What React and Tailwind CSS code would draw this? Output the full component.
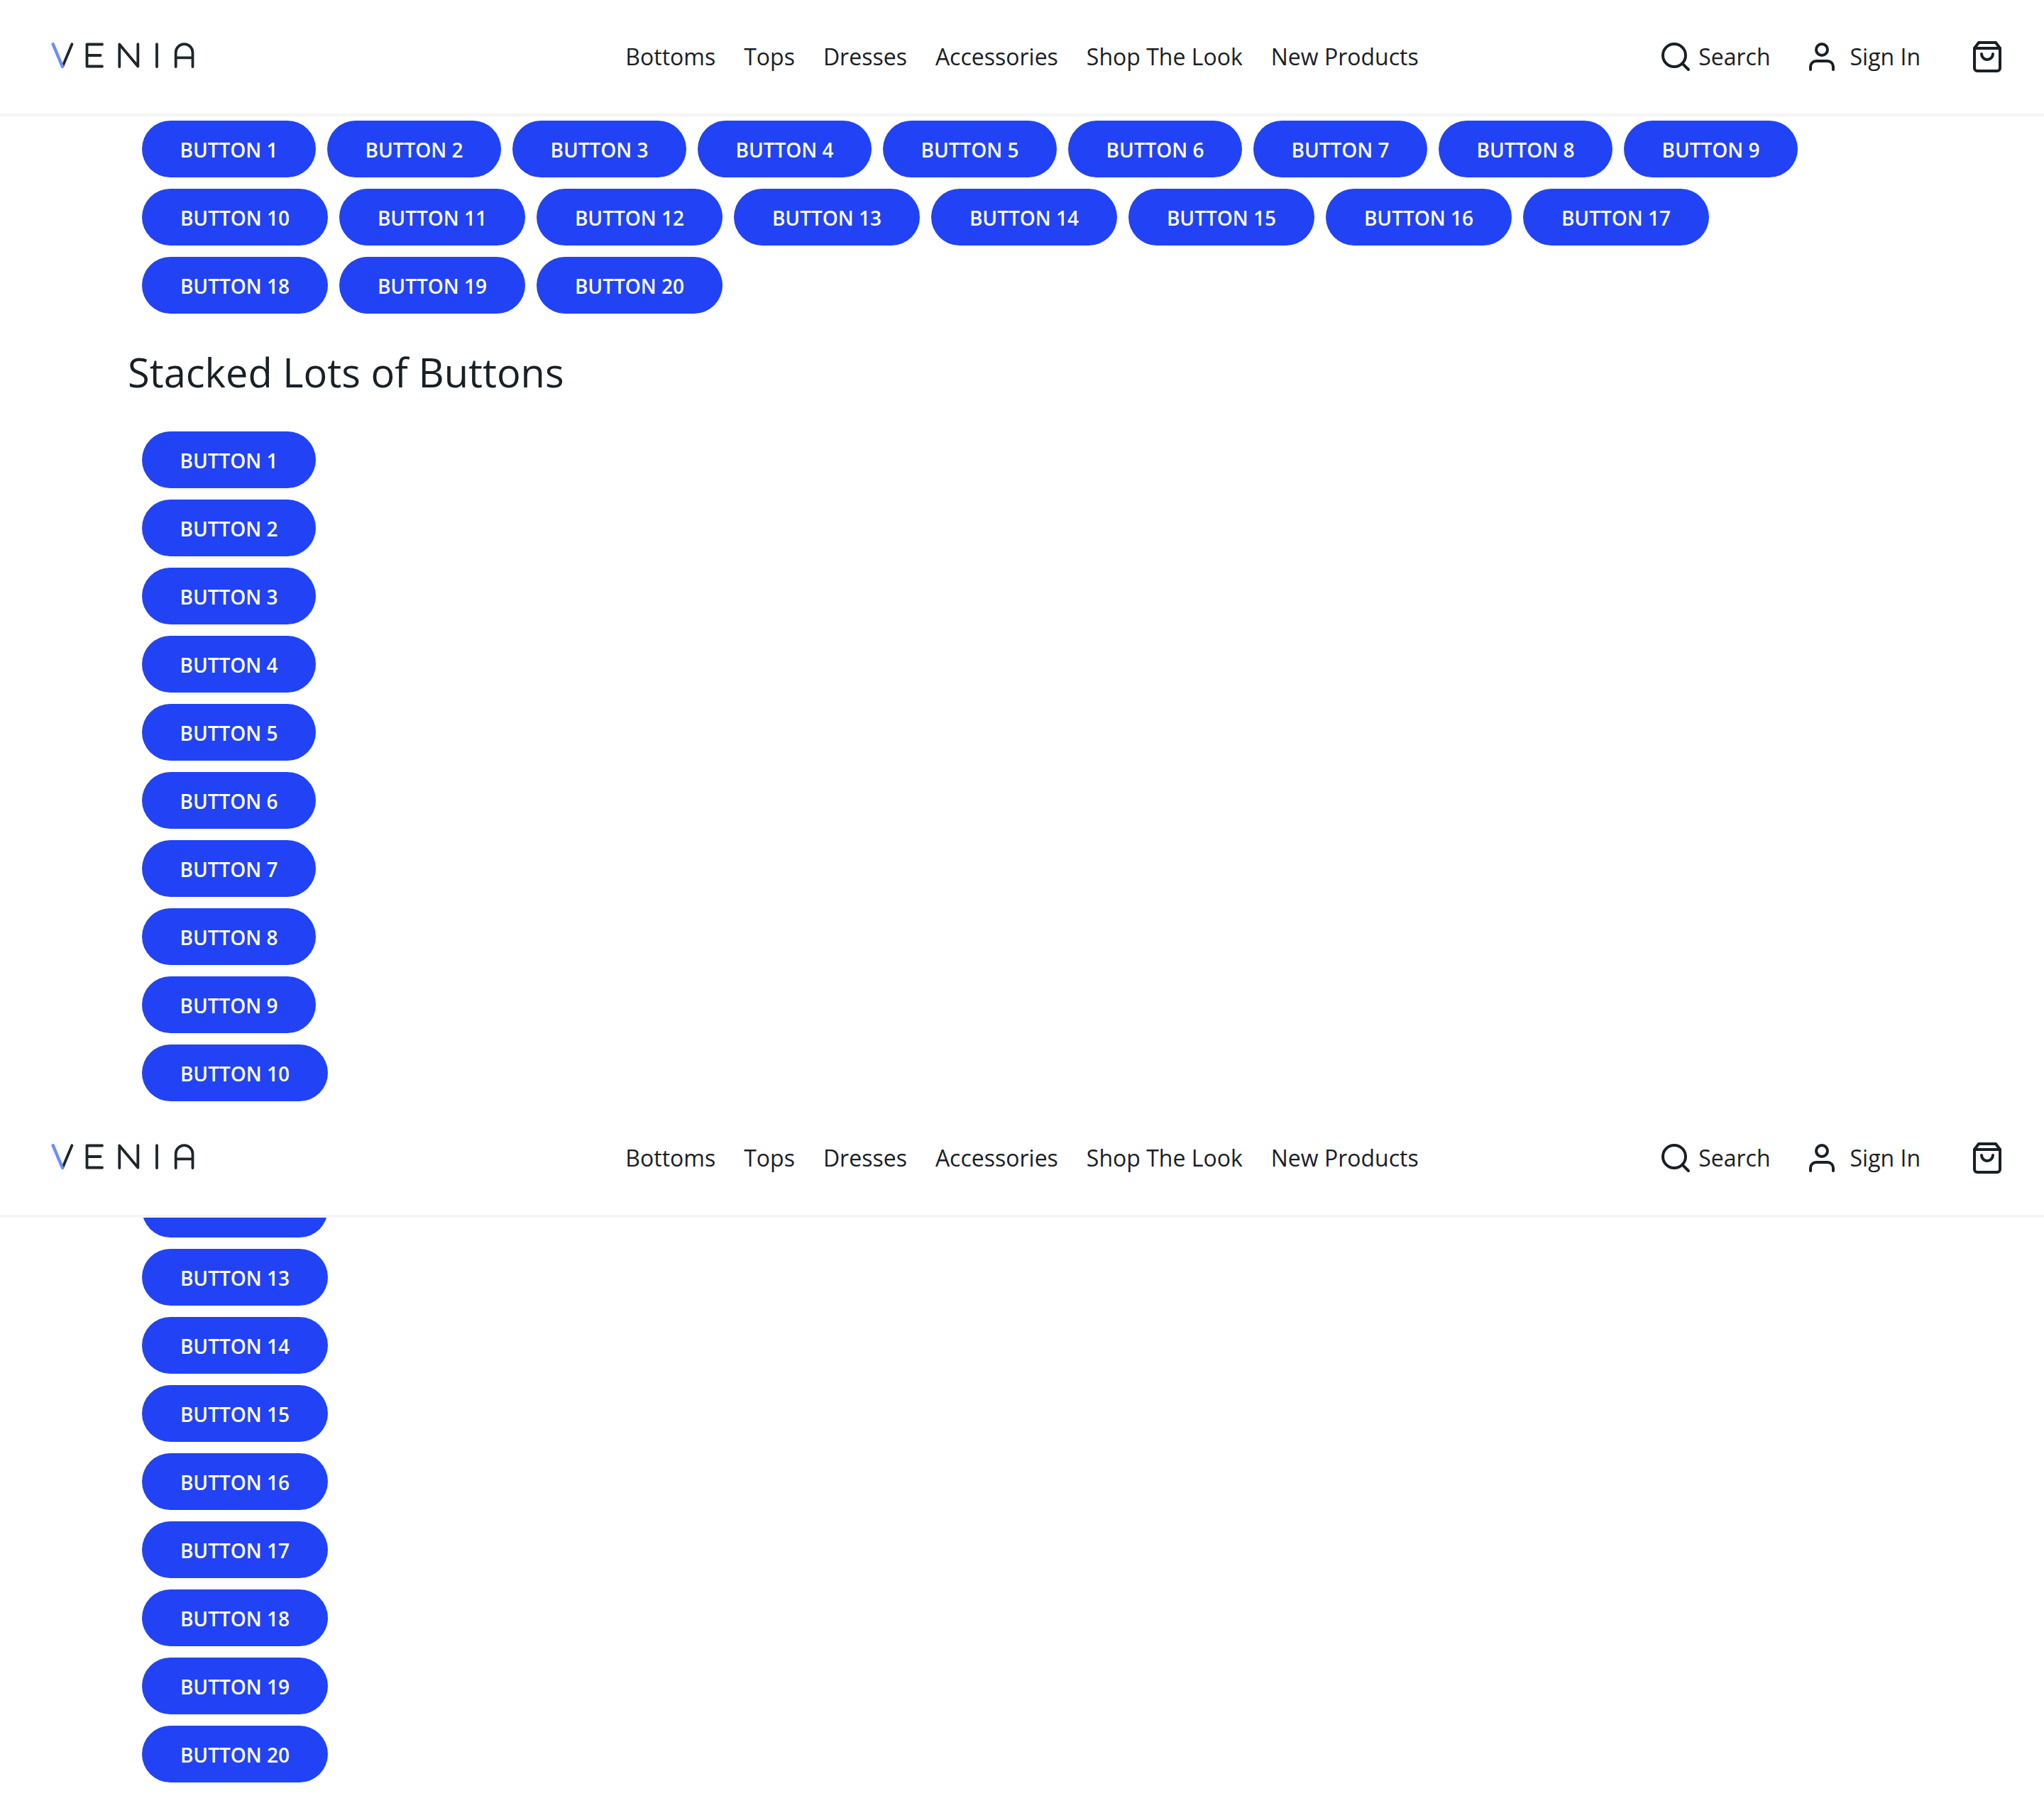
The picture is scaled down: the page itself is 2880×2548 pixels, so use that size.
import React from "react";

const links = ["Bottoms", "Tops", "Dresses", "Accessories", "Shop The Look", "New Products"];

const range = (from, to) => Array.from({ length: to - from + 1 }, (_, i) => from + i);

function Icon({ children }) {
  return (
    <svg
      viewBox="0 0 24 24"
      className="size-12 shrink-0"
      fill="none"
      stroke="currentColor"
      strokeWidth="2"
      strokeLinecap="round"
      strokeLinejoin="round"
      aria-hidden="true"
    >
      {children}
    </svg>
  );
}

function Logo() {
  return (
    <svg
      viewBox="0 0 204 40"
      className="h-10 w-[204px]"
      fill="none"
      stroke="#1f262a"
      strokeWidth="3.8"
      strokeLinecap="round"
      strokeLinejoin="round"
      role="img"
      aria-label="Venia"
    >
      <path d="M29.4 2.2 16.3 33.6" />
      <path d="M2.6 2.2 16 34" stroke="#6a8ffb" strokeWidth="4.4" />
      <path d="M72 2.5H50.5V33.5H72M50.5 18H69.5" />
      <path d="M96.3 34V2.5L122.3 33.5V2.2" />
      <path d="M149 2.2V34" />
      <path d="M175.7 34V14a11.9 11.9 0 0 1 23.8 0V34M175.7 21.3H199.5" />
    </svg>
  );
}

function Header() {
  return (
    <header className="relative z-10 grid h-[164px] grid-cols-[1fr_auto_1fr] items-center border-b-4 border-[#f4f5f5] bg-white px-14 text-[32px] leading-[48px]">
      <a href="#home" className="ml-4 justify-self-start">
        <Logo />
      </a>
      <nav className="flex gap-10">
        {links.map((label) => (
          <a key={label} href="#shop" className="whitespace-nowrap">
            {label}
          </a>
        ))}
      </nav>
      <div className="flex items-center justify-self-end">
        <button type="button" className="mr-12 flex items-center gap-2">
          <Icon>
            <circle cx="11" cy="11" r="8" />
            <path d="M21 21l-4.35-4.35" />
          </Icon>
          <span>Search</span>
        </button>
        <button type="button" className="mr-[70px] flex items-center gap-4">
          <Icon>
            <path d="M20 21v-2a4 4 0 0 0-4-4H8a4 4 0 0 0-4 4v2" />
            <circle cx="12" cy="7" r="4" />
          </Icon>
          <span>Sign In</span>
        </button>
        <button type="button" aria-label="Shopping bag">
          <Icon>
            <path d="M6 2L3 6v14a2 2 0 0 0 2 2h14a2 2 0 0 0 2-2V6l-3-4z" />
            <path d="M3 6h18" />
            <path d="M16 10a4 4 0 0 1-8 0" />
          </Icon>
        </button>
      </div>
    </header>
  );
}

function PillButton({ n }) {
  const width = n < 10 ? "min-w-[245px]" : "min-w-[262px]";
  return (
    <button
      type="button"
      className={`${width} h-20 rounded-full bg-[#2143f5] px-12 pt-0.5 text-center text-[28px] leading-9 font-semibold whitespace-nowrap text-white`}
    >
      BUTTON {n}
    </button>
  );
}

function Stack({ from, to }) {
  return (
    <div className="flex flex-col items-start gap-4 px-5">
      {range(from, to).map((n) => (
        <PillButton key={n} n={n} />
      ))}
    </div>
  );
}

export default function App() {
  return (
    <div className="bg-white font-['Open_Sans',sans-serif] text-[#192025]">
      <section>
        <Header />
        <main className="px-[180px] pt-1.5">
          <div className="flex flex-wrap gap-4 px-5">
            {range(1, 20).map((n) => (
              <PillButton key={n} n={n} />
            ))}
          </div>
          <h2 className="mt-10 mb-[42px] text-[56px] leading-[84px]">Stacked Lots of Buttons</h2>
          <Stack from={1} to={10} />
        </main>
      </section>
      <section>
        <Header />
        <div className="-mt-[52px] px-[180px] pb-9">
          <Stack from={12} to={20} />
        </div>
      </section>
    </div>
  );
}
